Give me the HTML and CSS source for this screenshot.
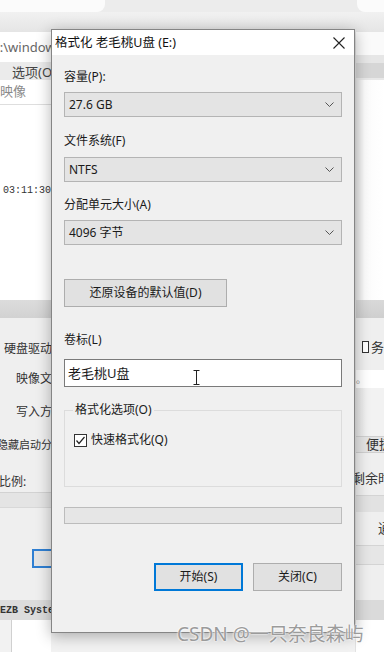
FILE: index.html
```html
<!DOCTYPE html>
<html lang="zh-CN">
<head>
    <meta charset="UTF-8">
    <meta name="viewport" content="width=device-width, initial-scale=1.0">
    <title>格式化 老毛桃U盘 (E:)</title>
    <link rel="stylesheet" href="styles.css">
</head>
<body>
    <!-- blurred app behind the dialog -->
    <div class="desk">
        <div class="top-strip">
            <div class="tab-left"></div>
            <div class="tab-right"></div>
        </div>
        <div class="shade"></div>
        <div class="app">
            <div class="col-left">
                <div class="lc-path"><span>F:\windows</span></div>
                <div class="lc-menu">选项(O)</div>
                <div class="lc-tab">映像</div>
                <div class="lc-log">03:11:30</div>
                <div class="lc-bar"></div>
                <div class="lc-panel">
                    <div class="lbl lbl-1">硬盘驱动器</div>
                    <div class="lbl lbl-2">映像文件</div>
                    <div class="lbl lbl-3">写入方式</div>
                    <div class="lbl lbl-4">隐藏启动分区</div>
                    <div class="lbl lbl-5">比例:</div>
                    <div class="lc-band"></div>
                    <div class="lc-btn"></div>
                </div>
                <div class="lc-status">EZB Systems</div>
                <div class="lc-bottom"></div>
            </div>
            <div class="col-mid"></div>
            <div class="col-right">
                <div class="rc-white"></div>
                <div class="rc-menu"></div>
                <div class="rc-fade"></div>
                <div class="rc-bar"></div>
                <div class="rc-panel">
                    <div class="rc-check"><span class="box"></span>务</div>
                    <div class="rc-field">。</div>
                    <div class="rc-gap"></div>
                    <div class="rc-btn">便捷</div>
                    <div class="rc-text">剩余时间</div>
                    <div class="rc-band"></div>
                    <div class="rc-text2">通</div>
                    <div class="rc-band2"></div>
                </div>
                <div class="rc-status"></div>
            </div>
        </div>
    </div>

    <div class="dialog">
        <div class="titlebar">
            <span class="title">格式化 老毛桃U盘 (E:)</span>
            <svg class="close" width="12" height="12" viewBox="0 0 12 12">
                <path d="M0.5 0.5 L11.5 11.5 M11.5 0.5 L0.5 11.5" stroke="#222" stroke-width="1.1" fill="none"/>
            </svg>
        </div>
        <div class="dlg-body">
            <div class="label first">容量(P):</div>
            <div class="combo">
                <span>27.6 GB</span>
                <svg width="9" height="5" viewBox="0 0 9 5"><polyline points="0.5,0.5 4.5,4.5 8.5,0.5" stroke="#555" fill="none"/></svg>
            </div>
            <div class="label">文件系统(F)</div>
            <div class="combo">
                <span>NTFS</span>
                <svg width="9" height="5" viewBox="0 0 9 5"><polyline points="0.5,0.5 4.5,4.5 8.5,0.5" stroke="#555" fill="none"/></svg>
            </div>
            <div class="label third">分配单元大小(A)</div>
            <div class="combo">
                <span>4096 字节</span>
                <svg width="9" height="5" viewBox="0 0 9 5"><polyline points="0.5,0.5 4.5,4.5 8.5,0.5" stroke="#555" fill="none"/></svg>
            </div>
            <div class="btn restore">还原设备的默认值(D)</div>
            <div class="label volume">卷标(L)</div>
            <div class="textbox">
                老毛桃U盘
                <svg class="ibeam" width="7" height="15" viewBox="0 0 7 15">
                    <path d="M0.5 0.5 H6.5 M3.5 0.5 V14.5 M0.5 14.5 H6.5" stroke="#222" fill="none"/>
                </svg>
            </div>
            <div class="group">
                <span class="group-title">格式化选项(O)</span>
                <label class="check">
                    <svg width="13" height="13" viewBox="0 0 13 13">
                        <rect x="0.5" y="0.5" width="12" height="12" fill="#fff" stroke="#333"/>
                        <polyline points="2.5,6.5 5,9.5 10.5,3" stroke="#222" stroke-width="1.2" fill="none"/>
                    </svg>
                    快速格式化(Q)
                </label>
            </div>
            <div class="progress"></div>
            <div class="actions">
                <div class="btn primary">开始(S)</div>
                <div class="btn">关闭(C)</div>
            </div>
        </div>
    </div>

    <div class="watermark">CSDN @一只奈良森屿</div>
</body>
</html>
```

FILE: styles.css
```css
body {
    margin: 0;
    width: 384px;
    height: 652px;
    overflow: hidden;
    position: relative;
    background-color: #f2f2f2;
    font-family: "Noto Sans", "Noto Sans CJK SC", sans-serif;
    color: #1a1a1a;
}

/* background window */
.desk {
    height: 652px;
    display: flex;
    flex-direction: column;
}
.top-strip {
    height: 12px;
    display: flex;
    justify-content: space-between;
    background-color: #ececec;
}
.tab-left {
    width: 105px;
    background-color: #fbfbfb;
    border-bottom-right-radius: 8px;
}
.tab-right {
    width: 27px;
    background-color: #fbfbfb;
    border-bottom-left-radius: 8px;
}
.shade {
    height: 20px;
    background: linear-gradient(#f1f1f1, #e5e5e5);
}
.app {
    flex: 1;
    display: grid;
    grid-template-columns: 51px 1fr 29px;
    font-size: 13px;
    line-height: 16px;
    color: #444;
}
.col-left, .col-right {
    display: flex;
    flex-direction: column;
}
.lc-path {
    height: 30px;
    box-sizing: border-box;
    padding-top: 7px;
    background-color: #fff;
    color: #666;
    white-space: nowrap;
}
.lc-path span {
    margin-left: -7px;
}
.lc-menu {
    height: 18px;
    box-sizing: border-box;
    padding: 2px 0 0 12px;
    background-color: #ebebeb;
    white-space: nowrap;
}
.lc-tab {
    height: 25px;
    box-sizing: border-box;
    padding-top: 3px;
    background-color: #fff;
    border-bottom: 1px solid #dedede;
    color: #8a8a8a;
    white-space: nowrap;
}
.lc-log {
    height: 195px;
    box-sizing: border-box;
    padding: 78px 0 0 3px;
    background-color: #fff;
    font-family: "Liberation Mono", monospace;
    font-size: 10px;
    color: #333;
    white-space: nowrap;
}
.lc-bar {
    height: 18px;
    background: linear-gradient(#dcdcdc, #d2d2d2);
}
.lc-panel {
    height: 282px;
    box-sizing: border-box;
    padding-top: 23px;
    background-color: #efefef;
    color: #333;
    white-space: nowrap;
}
.lbl {
    line-height: 16px;
    font-size: 12px;
}
.lbl-1 { padding-left: 4px; height: 30px; }
.lbl-2 { padding-left: 16px; height: 33px; }
.lbl-3 { padding-left: 16px; height: 33px; }
.lbl-4 { margin-left: -3px; height: 37px; font-size: 11px; }
.lbl-5 { margin-left: -1px; height: 18px; }
.lc-band {
    height: 16px;
    box-sizing: border-box;
    background-color: #e4e4e4;
    border-top: 1px solid #d2d2d2;
    border-bottom: 1px solid #d8d8d8;
}
.lc-btn {
    margin: 41px 0 0 32px;
    height: 19px;
    box-sizing: border-box;
    border: 2px solid #2f7fd2;
    border-right: none;
    background-color: #e3e3e3;
}
.lc-status {
    margin-top: auto;
    height: 20px;
    box-sizing: border-box;
    padding-top: 3px;
    background-color: #dcdcdc;
    font-family: "Liberation Mono", monospace;
    font-size: 10px;
    font-weight: bold;
    color: #333;
    white-space: nowrap;
}
.lc-bottom {
    height: 32px;
    background-color: #fff;
    border-left: 1px solid #d0d0d0;
    margin-left: 11px;
}
.col-right {
    border-left: 1px solid #e2e2e2;
}
.rc-white {
    height: 23px;
    background-color: #fafafa;
}
.rc-menu {
    height: 25px;
    background: linear-gradient(#e6e6e6 0, #e6e6e6 30%, #d6d6d6 30%, #d6d6d6 90%, #e8e8e8 90%);
}
.rc-fade {
    height: 220px;
    background: linear-gradient(90deg, #e6e6e6, #fbfbfb 30%, #ffffff);
}
.rc-bar {
    height: 18px;
    background: linear-gradient(#d9d9d9, #cfcfcf);
}
.rc-panel {
    flex: 1;
    background-color: #efefef;
    color: #333;
    white-space: nowrap;
}
.rc-check {
    margin-top: 21px;
    padding-left: 6px;
    height: 16px;
    display: flex;
    align-items: center;
    gap: 2px;
}
.rc-check .box {
    width: 12px;
    height: 12px;
    box-sizing: border-box;
    border: 1px solid #333;
    background-color: #fff;
}
.rc-field {
    margin-top: 15px;
    height: 18px;
    background-color: #fff;
    font-size: 10px;
    line-height: 18px;
    color: #888;
}
.rc-gap {
    height: 48px;
    background: linear-gradient(90deg, #e4e4e4, #f2f2f2 40%);
}
.rc-btn {
    height: 17px;
    box-sizing: border-box;
    padding-left: 10px;
    background-color: #e4e4e4;
    border-top: 1px solid #cfcfcf;
    border-bottom: 1px solid #cfcfcf;
    line-height: 15px;
}
.rc-text {
    margin-top: 17px;
    margin-left: -4px;
}
.rc-band {
    margin-top: 9px;
    height: 16px;
    background-color: #e2e2e2;
    border-top: 1px solid #d4d4d4;
}
.rc-text2 {
    margin-top: 8px;
    padding-left: 22px;
}
.rc-band2 {
    margin-top: 9px;
    height: 18px;
    background-color: #e6e6e6;
    border-top: 1px solid #d4d4d4;
    border-bottom: 1px solid #d4d4d4;
}
.rc-status {
    height: 52px;
    background: linear-gradient(#dadada 0, #dadada 38%, #ffffff 38%);
}

/* format dialog */
.dialog {
    position: absolute;
    left: 51px;
    top: 29px;
    width: 304px;
    height: 604px;
    box-sizing: border-box;
    border: 1px solid #858585;
    background-color: #f0f0f0;
    box-shadow: 0 3px 14px rgba(0, 0, 0, 0.3);
    display: flex;
    flex-direction: column;
    font-size: 12px;
    line-height: 16px;
    color: #1a1a1a;
}
.titlebar {
    height: 25px;
    flex-shrink: 0;
    display: flex;
    align-items: center;
    padding-left: 3px;
    background-color: #fff;
}
.title {
    color: #111;
    font-size: 12.5px;
}
.close {
    margin-left: auto;
    margin-right: 9px;
}
.dlg-body {
    padding: 0 12px;
    display: flex;
    flex-direction: column;
}
.label {
    margin-top: 16px;
    margin-bottom: 8px;
}
.label.first {
    margin-top: 14px;
    margin-bottom: 7px;
}
.label.third {
    margin-top: 15px;
    margin-bottom: 7px;
}
.label.volume {
    margin-top: 25px;
    margin-bottom: 11px;
}
.combo {
    height: 25px;
    box-sizing: border-box;
    border: 1px solid #b4b4b4;
    background-color: #e4e4e4;
    display: flex;
    align-items: center;
    justify-content: space-between;
    padding: 0 7px 0 4px;
}
.btn {
    height: 28px;
    box-sizing: border-box;
    border: 1px solid #adadad;
    background-color: #e1e1e1;
    display: flex;
    align-items: center;
    justify-content: center;
}
.btn.restore {
    margin-top: 34px;
    width: 163px;
}
.textbox {
    height: 28px;
    box-sizing: border-box;
    border: 1px solid #7a7a7a;
    background-color: #fff;
    padding-left: 3px;
    display: flex;
    align-items: center;
    font-size: 13px;
    position: relative;
}
.ibeam {
    position: absolute;
    left: 128px;
    top: 10px;
}
.group {
    margin-top: 23px;
    height: 77px;
    box-sizing: border-box;
    border: 1px solid #dcdcdc;
    position: relative;
    padding: 21px 0 0 9px;
}
.group-title {
    position: absolute;
    left: 8px;
    top: -9px;
    padding: 0 2px;
    background-color: #f0f0f0;
}
.check {
    display: flex;
    align-items: center;
    gap: 4px;
}
.progress {
    margin-top: 20px;
    height: 17px;
    box-sizing: border-box;
    border: 1px solid #bcbcbc;
    background-color: #e6e6e6;
}
.actions {
    margin-top: 39px;
    display: flex;
    justify-content: flex-end;
    gap: 10px;
}
.actions .btn {
    width: 89px;
}
.btn.primary {
    width: 89px;
    border: 2px solid #0078d7;
}

.watermark {
    position: absolute;
    left: 177px;
    top: 623px;
    font-size: 19px;
    line-height: 22px;
    color: #9b9b9b;
    text-shadow: 0 0 2px #fff, 0 0 2px #fff;
    white-space: nowrap;
}
```
